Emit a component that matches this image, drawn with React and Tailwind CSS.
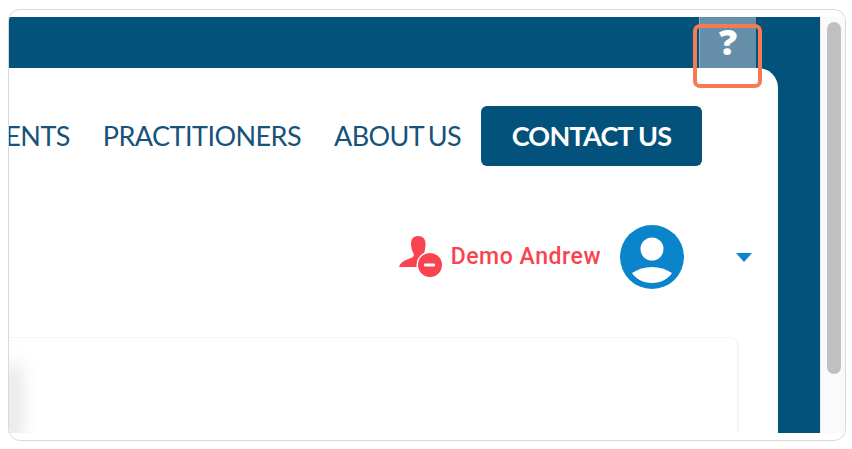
export default function App() {
  return (
    <div className="h-[449px] w-[852px] overflow-hidden bg-white pl-2 pt-[9px]">
      <div className="relative flex h-[432px] w-[838px] overflow-hidden rounded-[12px] border border-[#d9d9d9] bg-white pb-[7px] pt-[7px]">
        <div className="flex w-[811px] shrink-0 flex-col bg-[#02527c]">
          <div className="flex h-[51px] shrink-0 justify-end pr-[64px]">
            <div className="flex w-[57px] justify-center border-l border-[#8fb0c4] bg-[#6690aa] font-['Open_Sans',sans-serif] text-[36px] font-black leading-[50px] text-white">
              ?
            </div>
          </div>
          <div className="relative flex min-h-0 w-[769px] flex-1 flex-col overflow-hidden rounded-tr-[20px] bg-white">
            <nav className="flex h-[60px] shrink-0 translate-y-[38px] items-center justify-end gap-[33px] whitespace-nowrap pr-[76px] font-['Lato',sans-serif] text-[27px] tracking-[-0.55px] text-[#17527a]">
              <span className="shrink-0">PATIENTS</span>
              <span className="shrink-0">PRACTITIONERS</span>
              <span className="shrink-0 tracking-[-0.6px] [word-spacing:-2px]">ABOUT US</span>
              <span className="-ml-[13px] flex h-[60px] w-[221px] shrink-0 items-center justify-center rounded-[6px] bg-[#02527c] text-[27px] font-bold tracking-[-0.75px] text-white">
                CONTACT US
              </span>
            </nav>
            <div className="mt-[97px] flex h-[64px] shrink-0 items-center justify-end pr-[26px]">
              <svg width="44" height="44" viewBox="0 0 44 44" className="mr-[8px]">
                <path d="M19 1c-4.500 0-7 3-7 7.500 0 4 1 7.500 2.500 10 .8 1.500.5 3-1.500 4C9 24.500 2 25.500 0 32h20c1-4 4-7 7-8 0-3-1-4-2-5.500 1-3 1.500-6.500 1.500-10C26.500 4 24 1 19 1z" fill="#f9434f" />
                <circle cx="31" cy="30" r="13.500" fill="#fff" />
                <circle cx="31" cy="30" r="12" fill="#f9434f" />
                <rect x="25" y="28.500" width="11" height="3" rx="1" fill="#fff" />
              </svg>
              <span className="mr-[19px] pt-[1px] font-['Roboto',sans-serif] text-[23px] font-medium tracking-[0.55px] text-[#f9434f]">Demo Andrew</span>
              <svg width="64" height="64" viewBox="0 0 64 64" className="mr-[52px]">
                <circle cx="32" cy="32" r="32" fill="#0a85cb" />
                <circle cx="32" cy="24" r="11.500" fill="#fff" />
                <path d="M12 48c6-4 13-6 20-6s14 2 20 6c-4 6-11 10-20 10s-16-4-20-10z" fill="#fff" />
              </svg>
              <svg width="16" height="9" viewBox="0 0 16 9">
                <path d="M0 0h16L8 9z" fill="#0a85cb" />
              </svg>
            </div>
            <div className="relative mt-[48px] h-[200px] w-[730px] shrink-0 rounded-tr-[8px] border-r-2 border-t border-[#f6f6f6] bg-white" />
            <div className="absolute -bottom-[12px] -left-[6px] h-[80px] w-[18px] bg-[#e4e4e4] blur-[9px]" />
          </div>
        </div>
        <div className="relative w-[25px] shrink-0 border-l border-[#ececec] bg-[#fafafa]">
          <div className="absolute left-[6px] top-[5px] h-[352px] w-[14px] rounded-full bg-[#c0c0c0]" />
        </div>
        <div className="absolute left-[684px] top-[14px] h-[64px] w-[69px] rounded-[7px] border-[4px] border-[#f77a52]" />
      </div>
    </div>
  );
}
